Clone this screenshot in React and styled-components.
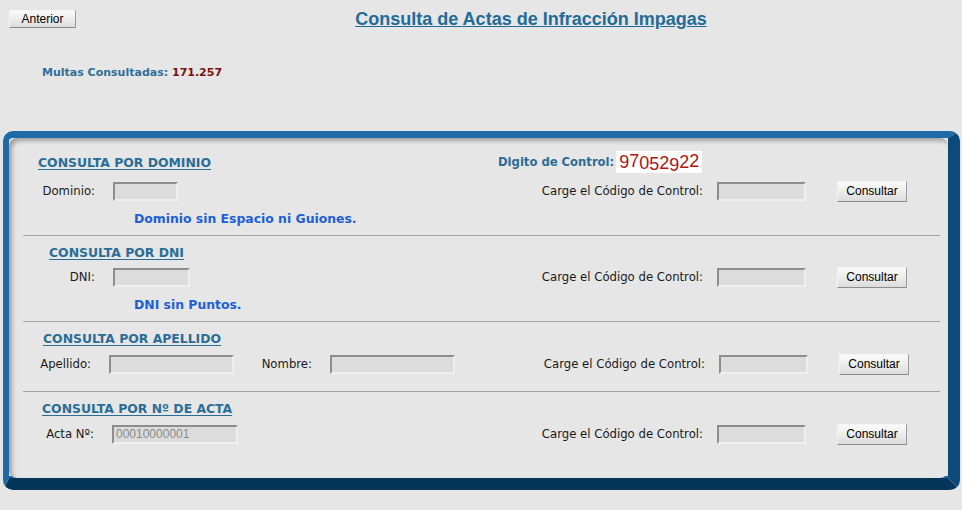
import React from "react";
import styled, { createGlobalStyle } from "styled-components";

const GlobalStyle = createGlobalStyle`
  body {
    margin: 0;
    background: #e6e6e6;
    font-family: "DejaVu Sans", Verdana, sans-serif;
    font-size: 11px;
    color: #1a1a1a;
  }
`;

const Header = styled.div`
  display: grid;
  grid-template-columns: 100px 1fr;
  align-items: start;
  padding-top: 10px;
`;

const Button = styled.button`
  font-family: "Liberation Sans", Arial, sans-serif;
  font-size: 12px;
  color: #000;
  width: ${(p) => p.$w || 70}px;
  height: ${(p) => p.$h || 21}px;
  padding: 0;
  background: linear-gradient(#fbfbfb, #e9e9e9 60%, #dcdcdc);
  border: 1px solid;
  border-color: #f4f4f4 #9a9a9a #8c8c8c #f4f4f4;
  cursor: pointer;
`;

const BackButton = styled(Button)`
  margin-left: 9px;
`;

const Title = styled.h1`
  margin: 0;
  text-align: center;
  font-family: "Liberation Sans", Arial, sans-serif;
  font-size: 18px;
  font-weight: bold;
  line-height: 18px;
  color: #1f6b99;
  text-decoration: underline;
`;

const Counter = styled.div`
  margin: 38px 0 0 42px;
  font-weight: bold;
  font-size: 11px;
  color: #2f6f98;
`;

const Count = styled.span`
  color: #7b1111;
`;

const Frame = styled.div`
  margin: 52px 2px 0 3px;
  border-style: solid;
  border-width: 7px 12px 12px 6px;
  border-color: #1d6aa6 #0c4a7c #03365a #1d6aa6;
  border-radius: 10px;
  box-shadow: inset 0 -2px 0 #1766a2;
`;

const Panel = styled.div`
  background: #e6e6e6;
  border-radius: 8px;
  box-shadow: inset 3px 3px 4px rgba(0, 0, 0, 0.3);
  padding: 0 8px 0 14px;
  height: 340px;
`;

const Section = styled.div`
  display: flex;
  flex-direction: column;
  height: ${(p) => p.$h}px;
  border-bottom: ${(p) => (p.$last ? "none" : "1px solid #a3a3a3")};
  padding-top: ${(p) => p.$top}px;
  box-sizing: border-box;
`;

const TopLine = styled.div`
  display: flex;
  align-items: center;
  height: 22px;
`;

const Heading = styled.div`
  width: ${(p) => p.$w || "auto"};
  padding-left: ${(p) => p.$indent}px;
  font-weight: bold;
  font-size: 12.4px;
  color: #2a6d96;
  text-decoration: underline;
  text-underline-offset: 2px;
  box-sizing: border-box;
`;

const ControlTitle = styled.div`
  display: flex;
  align-items: center;
  font-weight: bold;
  font-size: 11.6px;
  color: #2a6d96;
`;

const Captcha = styled.div`
  margin-left: 2px;
  width: 86px;
  height: 22px;
  background: #fff;
  display: flex;
  align-items: center;
  padding-left: 3px;
  box-sizing: border-box;
  font-family: "Liberation Sans", Arial, sans-serif;
  font-weight: normal;
  font-size: 18px;
  color: #b01212;
`;

const Glyph = styled.span`
  display: inline-block;
`;

const Row = styled.div`
  display: flex;
  align-items: center;
  height: 22px;
  margin-top: ${(p) => p.$mt}px;
  padding-right: ${(p) => p.$pr}px;
`;

const FieldLabel = styled.span`
  width: ${(p) => p.$w}px;
  text-align: right;
  font-size: 11.7px;
  margin-right: 18px;
  flex: none;
`;

const Input = styled.input`
  width: ${(p) => p.$w}px;
  height: 19px;
  box-sizing: border-box;
  margin: 0;
  padding: 0 2px;
  background: #dcdcdc;
  border: 2px solid;
  border-color: #8d8d8d #efefef #efefef #8d8d8d;
  font-family: "Liberation Sans", Arial, sans-serif;
  font-size: 12px;
  color: #888;
  &::placeholder {
    color: #8a8a8a;
  }
`;

const Spacer = styled.div`
  flex: 1;
`;

const Gap = styled.span`
  display: inline-block;
  width: ${(p) => p.$w}px;
  flex: none;
`;

const ControlLabel = styled.span`
  font-size: 11.7px;
  margin-right: 14px;
`;

const Hint = styled.div`
  margin: 9px 0 0 ${(p) => p.$indent}px;
  font-weight: bold;
  font-size: 12.4px;
  color: #1c5fd6;
`;

const captchaDigits = [
  ["9", 0],
  ["7", -1],
  ["0", 1],
  ["5", 2],
  ["2", 1],
  ["9", 3],
  ["2", 0],
  ["2", -1],
];

function ControlGroup({ codeWidth = 89 }) {
  return (
    <>
      <ControlLabel>Carge el Código de Control:</ControlLabel>
      <Input $w={codeWidth} />
      <Gap $w={31} />
      <Button>Consultar</Button>
    </>
  );
}

export default function App() {
  return (
    <>
      <GlobalStyle />
      <Header>
        <BackButton $w={67} $h={18}>
          Anterior
        </BackButton>
        <Title>Consulta de Actas de Infracción Impagas</Title>
      </Header>
      <Counter>
        Multas Consultadas: <Count>171.257</Count>
      </Counter>

      <Frame>
        <Panel>
          <Section $h={98} $top={13}>
            <TopLine>
              <Heading $w="475px" $indent={15}>
                CONSULTA POR DOMINIO
              </Heading>
              <ControlTitle>
                Digito de Control:
                <Captcha>
                  {captchaDigits.map(([d, y], i) => (
                    <Glyph key={i} style={{ transform: `translateY(${y}px)` }}>
                      {d}
                    </Glyph>
                  ))}
                </Captcha>
              </ControlTitle>
            </TopLine>
            <Row $mt={7} $pr={33}>
              <FieldLabel $w={72}>Dominio:</FieldLabel>
              <Input $w={65} />
              <Spacer />
              <ControlGroup />
            </Row>
            <Hint $indent={111}>Dominio sin Espacio ni Guiones.</Hint>
          </Section>

          <Section $h={86} $top={5}>
            <TopLine>
              <Heading $indent={26}>CONSULTA POR DNI</Heading>
            </TopLine>
            <Row $mt={3} $pr={33}>
              <FieldLabel $w={72}>DNI:</FieldLabel>
              <Input $w={77} />
              <Spacer />
              <ControlGroup />
            </Row>
            <Hint $indent={111}>DNI sin Puntos.</Hint>
          </Section>

          <Section $h={70} $top={5}>
            <TopLine>
              <Heading $indent={20}>CONSULTA POR APELLIDO</Heading>
            </TopLine>
            <Row $mt={4} $pr={31}>
              <FieldLabel $w={68}>Apellido:</FieldLabel>
              <Input $w={125} />
              <Gap $w={26} />
              <FieldLabel $w={52}>Nombre:</FieldLabel>
              <Input $w={125} />
              <Spacer />
              <ControlGroup />
            </Row>
          </Section>

          <Section $h={86} $top={5} $last>
            <TopLine>
              <Heading $indent={19}>CONSULTA POR Nº DE ACTA</Heading>
            </TopLine>
            <Row $mt={4} $pr={33}>
              <FieldLabel $w={71}>Acta Nº:</FieldLabel>
              <Input $w={126} placeholder="00010000001" />
              <Spacer />
              <ControlGroup />
            </Row>
          </Section>
        </Panel>
      </Frame>
    </>
  );
}
